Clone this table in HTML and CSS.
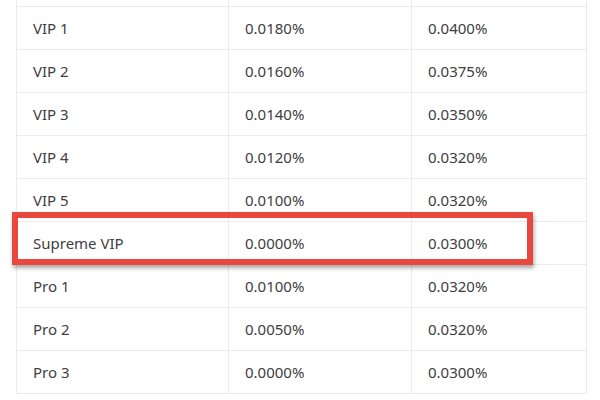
FILE: index.html
```html
<!DOCTYPE html>
<html>
<head>
<meta charset="utf-8">
<link rel="stylesheet" href="styles.css">
</head>
<body>
<div class="wrap">
  <table class="fees">
    <tr class="spacer"><td></td><td></td><td></td></tr>
    <tr><td>VIP 1</td><td>0.0180%</td><td>0.0400%</td></tr>
    <tr><td>VIP 2</td><td>0.0160%</td><td>0.0375%</td></tr>
    <tr><td>VIP 3</td><td>0.0140%</td><td>0.0350%</td></tr>
    <tr><td>VIP 4</td><td>0.0120%</td><td>0.0320%</td></tr>
    <tr><td>VIP 5</td><td>0.0100%</td><td>0.0320%</td></tr>
    <tr><td>Supreme VIP</td><td>0.0000%</td><td>0.0300%</td></tr>
    <tr><td>Pro 1</td><td>0.0100%</td><td>0.0320%</td></tr>
    <tr><td>Pro 2</td><td>0.0050%</td><td>0.0320%</td></tr>
    <tr><td>Pro 3</td><td>0.0000%</td><td>0.0300%</td></tr>
  </table>
  <div class="highlight"></div>
</div>
</body>
</html>
```
FILE: styles.css
```css
html, body {
  margin: 0;
  padding: 0;
  background: #ffffff;
  overflow: hidden;
}
.wrap {
  position: relative;
  width: 600px;
  height: 400px;
  overflow: hidden;
  padding-left: 16px;
  box-sizing: border-box;
}
.fees {
  border-collapse: collapse;
  margin-top: -37px;
  width: 570px;
  font-family: "Noto Sans", "Open Sans", sans-serif;
  font-size: 15px;
  color: #404040;
  table-layout: fixed;
}
.fees td {
  border: 1px solid #ebebeb;
  height: 43px;
  padding: 0 0 0 16px;
  box-sizing: border-box;
  vertical-align: middle;
  white-space: nowrap;
}
.fees td:nth-child(1) { width: 212px; }
.fees td:nth-child(2) { width: 183px; }
.fees td:nth-child(3) { width: 175px; }
.highlight {
  position: absolute;
  left: 12px;
  top: 212px;
  width: 521px;
  height: 53px;
  box-sizing: border-box;
  border: 6px solid #e9483f;
  box-shadow: 1px 3px 4px rgba(0, 0, 0, 0.35);
}
```
